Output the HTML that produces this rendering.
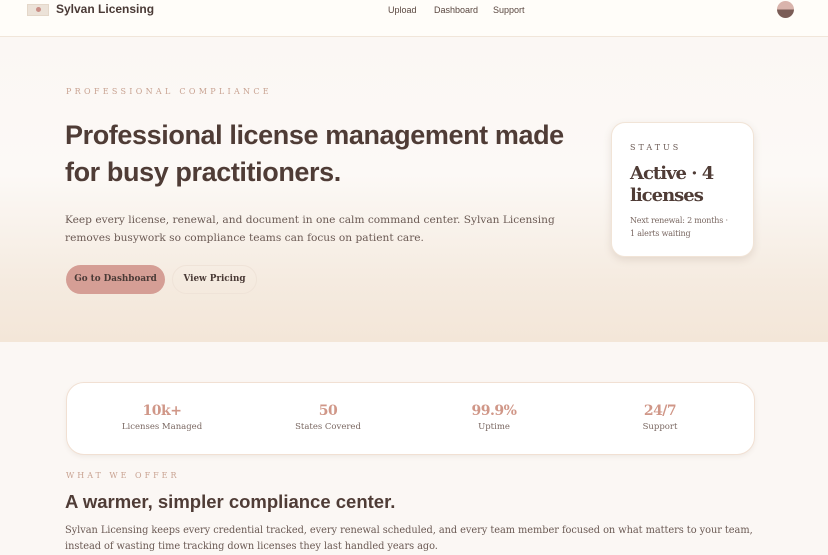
<!DOCTYPE html>
<html><head><meta charset="utf-8"><style>
*{box-sizing:border-box;margin:0;padding:0}
body{width:828px;height:554px;overflow:hidden;background:#fbf7f4;font-family:"DejaVu Serif",serif;color:#5a4740;position:relative}
.nav{position:absolute;top:0;left:0;width:828px;height:37px;background:#fffdf9;border-bottom:1px solid #f1e6da}
.logo{position:absolute;left:27px;top:4px;width:22px;height:12px;background:#ece2d8;border:1px solid #e4d7c9}
.logo:after{content:"";position:absolute;left:8px;top:2px;width:5px;height:5px;border-radius:50%;background:#c98e86}
.brand{position:absolute;left:56px;top:2px;font:bold 12px "Liberation Sans",sans-serif;color:#4a3a36}
.links{position:absolute;top:5px;font:9px "Liberation Sans",sans-serif;color:#5a4740}
.av{position:absolute;left:777px;top:1px;width:17px;height:17px;border-radius:50%;background:linear-gradient(#d9b4ac 50%,#7a5c56 50%)}
.hero{position:absolute;top:38px;left:0;width:828px;height:304px;background:linear-gradient(#fbf7f4 0%,#fcf9f6 45%,#f5ebe0 80%,#f3e6d8 100%)}
.eyebrow{position:absolute;left:66px;top:87px;font-size:8px;letter-spacing:3.3px;color:#c8a291}
h1{position:absolute;left:65px;top:117px;font:bold 27px/37px "Liberation Sans",sans-serif;color:#4f3c36;letter-spacing:-0.4px;width:540px}
.lead{position:absolute;left:65px;top:211px;font-size:10.6px;line-height:18px;color:#6b5a54;width:495px}
.btn1{position:absolute;left:66px;top:265px;width:99px;height:29px;border-radius:15px;background:#d59e95;font:bold 8.8px/29px "DejaVu Serif",serif;text-align:center;color:#4a3a36}
.btn2{position:absolute;left:172px;top:265px;width:85px;height:29px;border-radius:15px;border:1px solid #efe3d8;font:bold 8.8px/27px "DejaVu Serif",serif;text-align:center;color:#4a3a36}
.card{position:absolute;left:611px;top:122px;width:143px;height:135px;border-radius:14px;background:#fff;border:1px solid #f1e4d7;box-shadow:0 3px 8px rgba(120,90,70,.15);padding:20px 18px}
.card .l{font-size:8px;letter-spacing:3px;color:#6b5a54}
.card .b{font:bold 18px/22px "DejaVu Serif",serif;color:#4f3c36;margin-top:11px;letter-spacing:-1px}
.card .s{font-size:8px;line-height:13px;color:#7a6862;margin-top:7px;letter-spacing:-.2px}
.stats{position:absolute;left:66px;top:382px;width:689px;height:73px;border-radius:18px;background:#fff;border:1px solid #f1e0d3;box-shadow:0 2px 5px rgba(120,90,70,.08)}
.st{position:absolute;top:20px;width:160px;text-align:center}
.st b{display:block;font:bold 14px "DejaVu Serif",serif;color:#d09788;letter-spacing:-.5px}
.st span{display:block;font-size:8.5px;color:#7a6862;margin-top:3px}
.we{position:absolute;left:66px;top:471px;font-size:8px;letter-spacing:3px;color:#c8a291}
h2{position:absolute;left:65px;top:491px;font:bold 18.5px "Liberation Sans",sans-serif;color:#4f3c36}
.p2{position:absolute;left:65px;top:523px;font-size:9.8px;line-height:16px;color:#6b5a54;width:720px;letter-spacing:-.05px}
</style></head><body>
<div class="nav"><div class="logo"></div><div class="brand">Sylvan Licensing</div>
<div class="links" style="left:388px">Upload</div><div class="links" style="left:434px">Dashboard</div><div class="links" style="left:493px">Support</div>
<div class="av"></div></div>
<div class="hero"></div>
<div class="eyebrow">PROFESSIONAL COMPLIANCE</div>
<h1>Professional license management made for busy practitioners.</h1>
<div class="lead">Keep every license, renewal, and document in one calm command center. Sylvan Licensing removes busywork so compliance teams can focus on patient care.</div>
<div class="btn1">Go to Dashboard</div><div class="btn2">View Pricing</div>
<div class="card"><div class="l">STATUS</div><div class="b">Active · 4 licenses</div><div class="s">Next renewal: 2 months · 1 alerts waiting</div></div>
<div class="stats">
<div class="st" style="left:15px"><b>10k+</b><span>Licenses Managed</span></div>
<div class="st" style="left:181px"><b>50</b><span>States Covered</span></div>
<div class="st" style="left:347px"><b>99.9%</b><span>Uptime</span></div>
<div class="st" style="left:513px"><b>24/7</b><span>Support</span></div>
</div>
<div class="we">WHAT WE OFFER</div>
<h2>A warmer, simpler compliance center.</h2>
<div class="p2">Sylvan Licensing keeps every credential tracked, every renewal scheduled, and every team member focused on what matters to your team, instead of wasting time tracking down licenses they last handled years ago.</div>
</body></html>
